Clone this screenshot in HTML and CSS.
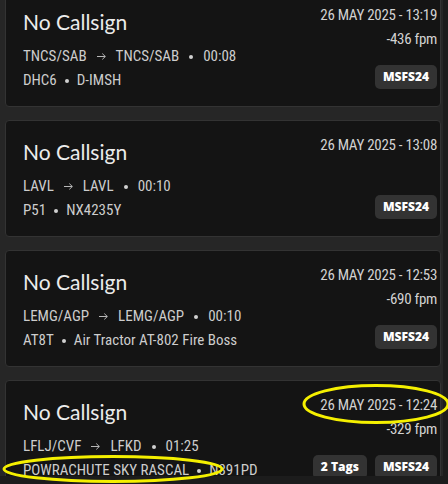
FILE: index.html
```html
<!DOCTYPE html>
<html>
<head>
<meta charset="utf-8">
<link rel="stylesheet" href="styles.css">
</head>
<body>
<div class="viewport">
  <div class="list">
    <div class="card">
      <div class="main">
        <div class="title">No Callsign</div>
        <div class="route">
          <span>TNCS/SAB</span>
          <svg class="arrow" width="9" height="7" viewBox="0 0 9 7"><path d="M0 3.5H8.3M5.3 0.6L8.3 3.5L5.3 6.4" fill="none" stroke="#b8b8b8" stroke-width="1"/></svg>
          <span>TNCS/SAB</span>
          <span class="dot"></span>
          <span>00:08</span>
        </div>
        <div class="aircraft">
          <span>DHC6</span>
          <span class="dot"></span>
          <span>D-IMSH</span>
        </div>
      </div>
      <div class="side">
        <div class="date">26 MAY 2025 - 13:19</div>
        <div class="fpm">-436 fpm</div>
        <div class="tags"><span class="badge">MSFS24</span></div>
      </div>
    </div>

    <div class="card">
      <div class="main">
        <div class="title">No Callsign</div>
        <div class="route">
          <span>LAVL</span>
          <svg class="arrow" width="9" height="7" viewBox="0 0 9 7"><path d="M0 3.5H8.3M5.3 0.6L8.3 3.5L5.3 6.4" fill="none" stroke="#b8b8b8" stroke-width="1"/></svg>
          <span>LAVL</span>
          <span class="dot"></span>
          <span>00:10</span>
        </div>
        <div class="aircraft">
          <span>P51</span>
          <span class="dot"></span>
          <span>NX4235Y</span>
        </div>
      </div>
      <div class="side">
        <div class="date">26 MAY 2025 - 13:08</div>
        <div class="tags"><span class="badge">MSFS24</span></div>
      </div>
    </div>

    <div class="card">
      <div class="main">
        <div class="title">No Callsign</div>
        <div class="route">
          <span>LEMG/AGP</span>
          <svg class="arrow" width="9" height="7" viewBox="0 0 9 7"><path d="M0 3.5H8.3M5.3 0.6L8.3 3.5L5.3 6.4" fill="none" stroke="#b8b8b8" stroke-width="1"/></svg>
          <span>LEMG/AGP</span>
          <span class="dot"></span>
          <span>00:10</span>
        </div>
        <div class="aircraft">
          <span>AT8T</span>
          <span class="dot"></span>
          <span>Air Tractor AT-802 Fire Boss</span>
        </div>
      </div>
      <div class="side">
        <div class="date">26 MAY 2025 - 12:53</div>
        <div class="fpm">-690 fpm</div>
        <div class="tags"><span class="badge">MSFS24</span></div>
      </div>
    </div>

    <div class="card">
      <div class="main">
        <div class="title">No Callsign</div>
        <div class="route">
          <span>LFLJ/CVF</span>
          <svg class="arrow" width="9" height="7" viewBox="0 0 9 7"><path d="M0 3.5H8.3M5.3 0.6L8.3 3.5L5.3 6.4" fill="none" stroke="#b8b8b8" stroke-width="1"/></svg>
          <span>LFKD</span>
          <span class="dot"></span>
          <span>01:25</span>
        </div>
        <div class="aircraft">
          <span>POWRACHUTE SKY RASCAL</span>
          <span class="dot"></span>
          <span>N391PD</span>
        </div>
      </div>
      <div class="side">
        <div class="date">26 MAY 2025 - 12:24</div>
        <div class="fpm">-329 fpm</div>
        <div class="tags"><span class="badge">2 Tags</span><span class="badge">MSFS24</span></div>
      </div>
    </div>
  </div>
</div>
<svg class="marks" width="448" height="484" viewBox="0 0 448 484">
  <ellipse cx="376" cy="404" rx="72" ry="18.5" fill="none" stroke="#f5f000" stroke-width="3"/>
  <ellipse cx="113" cy="469" rx="109" ry="12.5" fill="none" stroke="#f5f000" stroke-width="3"/>
</svg>
</body>
</html>
```
FILE: styles.css
```css
html, body {
  margin: 0;
  padding: 0;
  background: #1c1c1c;
}
.viewport {
  width: 448px;
  height: 484px;
  overflow: hidden;
  position: relative;
}
.list {
  width: 443px;
  height: 476px;
  overflow: hidden;
  background: #262626;
  box-sizing: border-box;
  padding-left: 5px;
}
.list > .card:first-child {
  margin-top: -10px;
}
.card {
  width: 436px;
  box-sizing: border-box;
  background: #141414;
  border: 1px solid #333333;
  border-radius: 4px;
  display: flex;
  justify-content: space-between;
  margin-bottom: 13px;
}
.main {
  padding: 19px 0 14px 17px;
  display: flex;
  flex-direction: column;
}
.title {
  font-family: "Lato", sans-serif;
  font-size: 21px;
  line-height: 24px;
  color: #ececec;
  margin-bottom: 10px;
}
.route, .aircraft {
  font-family: "Roboto", sans-serif;
  font-stretch: 79%;
  font-size: 15px;
  line-height: 24px;
  color: #cdcdcd;
  display: flex;
  align-items: center;
  white-space: nowrap;
}
.route { gap: 10px; }
.aircraft { gap: 8px; }
.dot {
  width: 4px;
  height: 4px;
  border-radius: 50%;
  background: #d0d0d0;
  margin-top: 2px;
}
.arrow {
  margin-top: 1px;
}
.side {
  padding: 12px 3px 17px 0;
  display: flex;
  flex-direction: column;
  align-items: flex-end;
}
.date, .fpm {
  font-family: "Roboto", sans-serif;
  font-stretch: 80%;
  font-size: 15px;
  letter-spacing: -0.3px;
  line-height: 24px;
  color: #d2d2d2;
  white-space: nowrap;
}
.tags {
  margin-top: auto;
  display: flex;
  gap: 8px;
}
.badge {
  display: block;
  height: 24px;
  line-height: 24px;
  padding: 0 8px;
  border-radius: 5px;
  background: #333333;
  color: #ffffff;
  font-family: "Open Sans", sans-serif;
  font-weight: 800;
  font-size: 12px;
}
.marks {
  position: fixed;
  left: 0;
  top: 0;
  pointer-events: none;
}
```
